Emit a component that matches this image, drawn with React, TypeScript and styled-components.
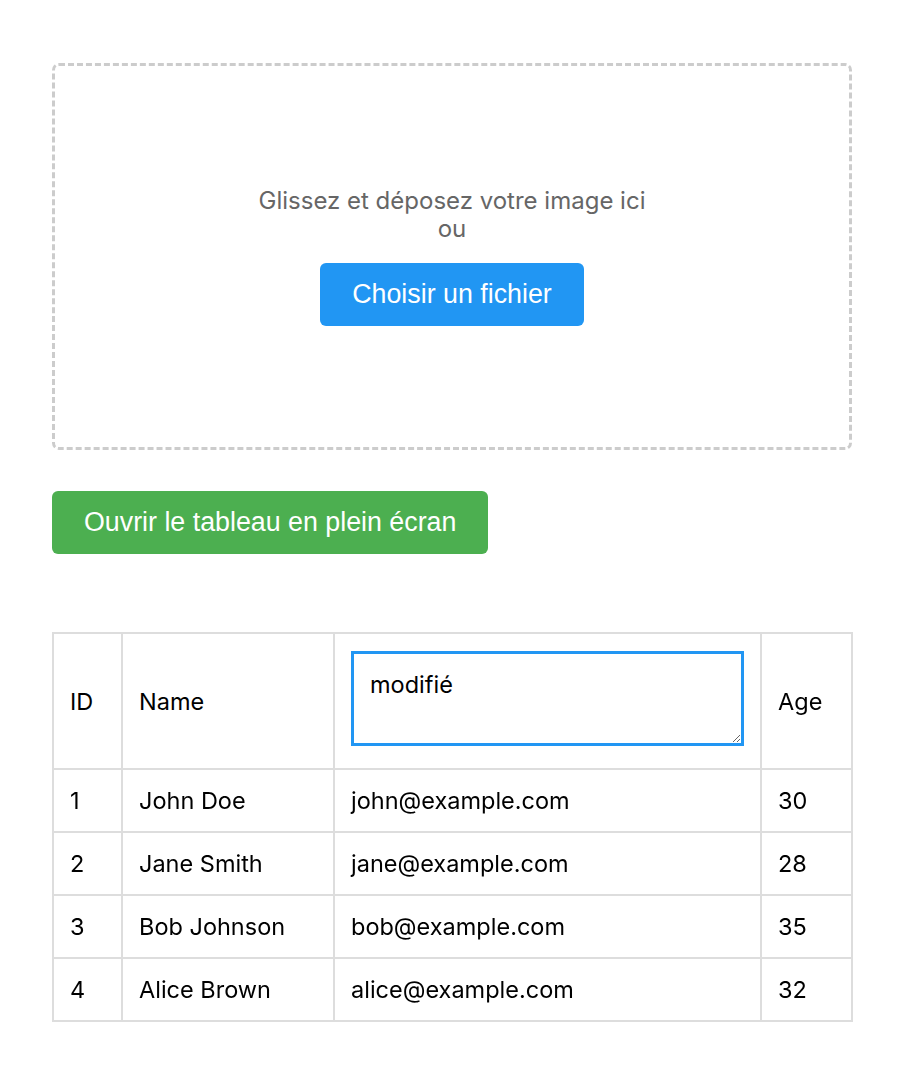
import React, { useEffect, useRef } from "react";
import styled, { createGlobalStyle } from "styled-components";

const GlobalStyle = createGlobalStyle`
  html, body { margin: 0; padding: 0; background: #ffffff; }
  body { font-family: Inter, "Noto Sans", sans-serif; color: #000; }
`;

const Page = styled.div`
  width: 800px;
  margin: 63px auto 0 52px;
  display: flex;
  flex-direction: column;
`;

const DropZone = styled.div`
  box-sizing: border-box;
  height: 387px;
  border: 3px dashed #cccccc;
  border-radius: 7px;
  display: flex;
  flex-direction: column;
  align-items: center;
  justify-content: center;
`;

const DropText = styled.p`
  margin: 0;
  font-family: Inter, sans-serif;
  font-size: 24px;
  line-height: 28px;
  color: #666666;
  text-align: center;
`;

const Button = styled.button<{ $color: string }>`
  border: none;
  border-radius: 6px;
  background: ${(p) => p.$color};
  color: #ffffff;
  font-family: "Liberation Sans", Arial, sans-serif;
  font-size: 26.8px;
  height: 63px;
  padding: 0 32px;
  cursor: pointer;
`;

const UploadButton = styled(Button)`
  margin-top: 20px;
`;

const FullscreenButton = styled(Button)`
  align-self: flex-start;
  margin-top: 41px;
`;

const Table = styled.table`
  margin-top: 78px;
  width: 799px;
  border-collapse: collapse;
  table-layout: fixed;
  font-family: Inter, sans-serif;
  font-size: 23.5px;
`;

const Cell = styled.td`
  border: 2px solid #dddddd;
  padding: 0 16px;
  height: 61px;
  text-align: left;
  vertical-align: middle;
  font-weight: 400;
`;

const HeadCell = styled(Cell).attrs({ as: "th" })`
  height: auto;
  padding: 17px 16px;
`;

const Editor = styled.textarea`
  display: block;
  box-sizing: border-box;
  width: 393px;
  height: 95px;
  margin-bottom: 5px;
  border: 3px solid #2196f3;
  border-radius: 0;
  outline: none;
  padding: 16px 16px 14px;
  font-family: Inter, sans-serif;
  font-size: 23.5px;
  line-height: 30px;
  color: #000;
  caret-color: #000;
`;

const rows = [
  { id: 1, name: "John Doe", email: "john@example.com", age: 30 },
  { id: 2, name: "Jane Smith", email: "jane@example.com", age: 28 },
  { id: 3, name: "Bob Johnson", email: "bob@example.com", age: 35 },
  { id: 4, name: "Alice Brown", email: "alice@example.com", age: 32 },
];

export default function App() {
  const ref = useRef<HTMLTextAreaElement>(null);
  useEffect(() => {
    const el = ref.current;
    if (el) {
      el.focus();
      el.setSelectionRange(el.value.length, el.value.length);
    }
  }, []);
  return (
    <>
      <GlobalStyle />
      <Page>
        <DropZone>
          <DropText>Glissez et déposez votre image ici</DropText>
          <DropText>ou</DropText>
          <UploadButton $color="#2196F3">Choisir un fichier</UploadButton>
        </DropZone>
        <FullscreenButton $color="#4CAF50">Ouvrir le tableau en plein écran</FullscreenButton>
        <Table>
          <colgroup>
            <col style={{ width: 69 }} />
            <col style={{ width: 212 }} />
            <col style={{ width: 427 }} />
            <col style={{ width: 91 }} />
          </colgroup>
          <thead>
            <tr>
              <HeadCell>ID</HeadCell>
              <HeadCell>Name</HeadCell>
              <HeadCell>
                <Editor ref={ref} defaultValue="modifié" />
              </HeadCell>
              <HeadCell>Age</HeadCell>
            </tr>
          </thead>
          <tbody>
            {rows.map((r) => (
              <tr key={r.id}>
                <Cell>{r.id}</Cell>
                <Cell>{r.name}</Cell>
                <Cell>{r.email}</Cell>
                <Cell>{r.age}</Cell>
              </tr>
            ))}
          </tbody>
        </Table>
      </Page>
    </>
  );
}
